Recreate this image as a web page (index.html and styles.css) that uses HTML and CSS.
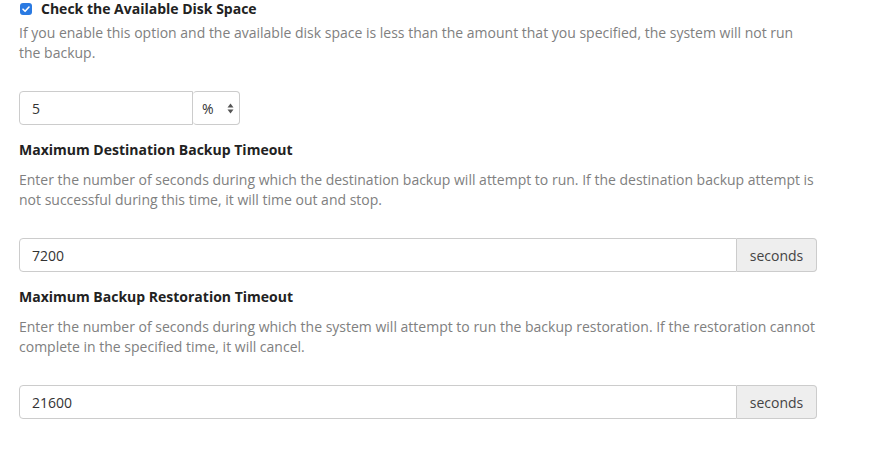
FILE: index.html
```html
<!DOCTYPE html>
<html>
<head>
    <meta name="viewport" content="width=device-width, initial-scale=1.0">
    <link rel="stylesheet" href="styles.css">
</head>
<body>

<div class="settings">
    <div class="group group-first">
        <label class="check-label">
            <span class="checkbox">
                <svg width="12" height="12" viewBox="0 0 12 12"><path d="M3 6.2 L5.1 8.3 L9 4" fill="none" stroke="#fff" stroke-width="1.6" stroke-linecap="round" stroke-linejoin="round"/></svg>
            </span>
            Check the Available Disk Space
        </label>
        <p class="help help-first">If you enable this option and the available disk space is less than the amount that you specified, the system will not run the backup.</p>
        <div class="input-row">
            <input type="text" class="form-control small-input" value="5">
            <div class="unit-select">
                <span>%</span>
                <svg width="7" height="11" viewBox="0 0 7 11"><path d="M3.5 0.5 L6.5 4.5 H0.5 Z M3.5 10.5 L6.5 6.5 H0.5 Z" fill="#555"/></svg>
            </div>
        </div>
    </div>

    <div class="group">
        <h4>Maximum Destination Backup Timeout</h4>
        <p class="help">Enter the number of seconds during which the destination backup will attempt to run. If the destination backup attempt is not successful during this time, it will time out and stop.</p>
        <div class="input-group">
            <input type="text" class="form-control" value="7200">
            <span class="addon">seconds</span>
        </div>
    </div>

    <div class="group">
        <h4>Maximum Backup Restoration Timeout</h4>
        <p class="help">Enter the number of seconds during which the system will attempt to run the backup restoration. If the restoration cannot complete in the specified time, it will cancel.</p>
        <div class="input-group">
            <input type="text" class="form-control" value="21600">
            <span class="addon">seconds</span>
        </div>
    </div>
</div>

</body>
</html>
```

FILE: styles.css
```css
* {
    box-sizing: border-box;
}

body {
    margin: 0;
    font-family: "Open Sans", Arial, sans-serif;
    font-size: 14px;
    color: #333;
    background-color: #ffffff;
}

.settings {
    width: 817px;
    padding-left: 19px;
}

.group {
    margin-top: 16px;
}

.group + .group {
    margin-top: 15px;
}

.group-first {
    margin-top: 0;
}

.check-label {
    display: flex;
    align-items: center;
    gap: 9px;
    height: 18px;
    padding-left: 1px;
    font-weight: bold;
    color: #222;
    line-height: 18px;
}

.checkbox {
    display: flex;
    align-items: center;
    justify-content: center;
    width: 12px;
    height: 12px;
    border-radius: 3px;
    background-color: #2a7ae2;
}

.checkbox svg {
    display: block;
}

h4 {
    margin: 0 0 10px;
    font-size: 14px;
    font-weight: bold;
    line-height: 20px;
    color: #222;
}

.help {
    margin: 0 0 28px;
    line-height: 20px;
    color: #808080;
}

.help-first {
    margin-top: 5px;
}

.input-row {
    display: flex;
    height: 34px;
}

.form-control {
    height: 34px;
    padding: 6px 12px;
    border: 1px solid #ccc;
    border-radius: 4px 0 0 4px;
    font-family: inherit;
    font-size: 14px;
    color: #333;
    outline: none;
}

.small-input {
    width: 174px;
}

.unit-select {
    display: flex;
    align-items: center;
    justify-content: space-between;
    width: 47px;
    height: 34px;
    padding: 0 5px 0 9px;
    border: 1px solid #ccc;
    border-left: none;
    border-radius: 4px;
    color: #333;
}

.input-group {
    display: flex;
    width: 798px;
    height: 34px;
}

.input-group .form-control {
    flex: 1;
    min-width: 0;
}

.addon {
    display: flex;
    align-items: center;
    justify-content: center;
    width: 80px;
    border: 1px solid #ccc;
    border-left: none;
    border-radius: 0 4px 4px 0;
    background-color: #eeeeee;
    color: #444;
}
```
